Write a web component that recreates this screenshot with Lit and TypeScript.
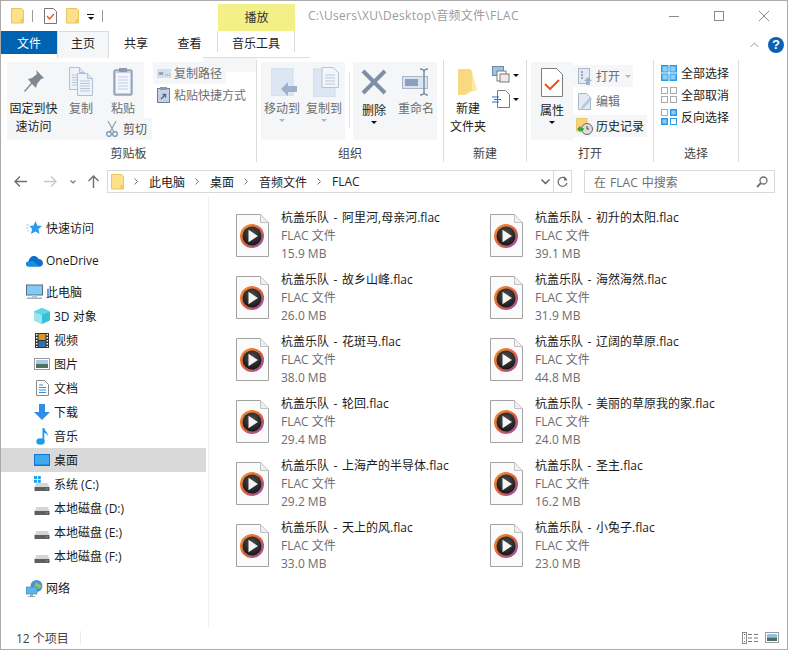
import { LitElement, html, css, svg } from "lit";
import { customElement } from "lit/decorators.js";

const folder = (w = 13, h = 16) => html`<svg width=${w} height=${h} viewBox="0 0 13 16"><path d="M.5.5h10l2 1.500v13H.5z" fill="#fde08a" stroke="#e8c564"/><rect x="9.500" y="11" width="3" height="4" fill="#f3c95f"/></svg>`;
const check = (w = 13, h = 16) => html`<svg width=${w} height=${h} viewBox="0 0 13 16"><path d="M.5.5h9l3 3v12H.5z" fill="#fff" stroke="#777"/><path d="M3 8l2.500 3L10 6" fill="none" stroke="#e8551e" stroke-width="1.400"/></svg>`;

const fileIcon = html`<svg width="33" height="43" viewBox="0 0 33 43">
  <defs><linearGradient id="ring" x1="0" y1="0" x2="1" y2="1"><stop offset="0" stop-color="#f59a2e"/><stop offset=".5" stop-color="#e0603c"/><stop offset="1" stop-color="#8a4bc0"/></linearGradient>
  <radialGradient id="disc" cx=".5" cy=".35" r=".7"><stop offset="0" stop-color="#4c4c4c"/><stop offset="1" stop-color="#141414"/></radialGradient></defs>
  <path d="M.5.5h24l8 8v34H.500z" fill="#fbfbfb" stroke="#a3a3a3"/><path d="M24.500.5v8h8" fill="#efefef" stroke="#c2c2c2"/>
  <circle cx="16" cy="22" r="12" fill="url(#ring)"/><circle cx="16" cy="22" r="9.500" fill="url(#disc)"/><path d="M12.500 15.800l9.500 6.200-9.500 6.200z" fill="#f4f4f4"/></svg>`;

const pc = html`<svg width="17" height="16" viewBox="0 0 17 16"><rect x=".5" y="1" width="16" height="10" fill="#7fcdf6" stroke="#5a6c7a"/><rect x="6" y="11" width="5" height="2.500" fill="#b9c4cc"/><rect x="1" y="13.500" width="15" height="1.500" fill="#9fb0bc"/></svg>`;
const drive = (win = false) => html`<svg width="16" height="16" viewBox="0 0 16 16">${win ? svg`<g fill="#1fa3ee"><rect x="0" y="0" width="3" height="3"/><rect x="3.800" y="0" width="3" height="3"/><rect x="0" y="3.800" width="3" height="3"/><rect x="3.800" y="3.800" width="3" height="3"/></g>` : ""}<path d="M2.500 7h11l2 4H.5z" fill="#d5d5d5"/><rect x=".5" y="11" width="15" height="4" fill="#5f5f5f"/><rect x="12" y="12.500" width="1.500" height="1" fill="#5fe05f"/></svg>`;

const navIcons: Record<string, unknown> = {
  star: html`<svg width="16" height="16" viewBox="0 0 16 16"><path d="M9.500 1l1.800 4.500L16 6l-3.500 3 1 5-4-2.500L5 14l1-5-2.500-3 4-.5z" fill="#2f9ceb"/><path d="M0 5h3M0 8h2.500M1 11h2" stroke="#9fd2f5"/></svg>`,
  cloud: html`<svg width="17" height="13" viewBox="0 0 17 13"><path d="M2.500 12.500C.5 12.500 0 10.800 0 10c0-1.500 1-2.500 2.600-2.500C3 4 5.500 2 8 2c2 0 3.700 1 4.500 3 2.500 0 4.500 1.800 4.500 4 0 2.200-1.500 3.500-3 3.500z" fill="#0f6fc6"/><path d="M2.500 12.500C1 12.500 0 11 0 10c0-1.500 1-2.300 2.600-2.300l4-.7 7 5.500z" fill="#1590de"/></svg>`,
  pc,
  cube: html`<svg width="16" height="16" viewBox="0 0 16 16"><path d="M8 0l8 3.500v9L8 16 0 12.500v-9z" fill="#35c1d8"/><path d="M0 3.500L8 7v9l-8-3.500z" fill="#9be5ee"/><path d="M8 0l8 3.500L8 7 0 3.500z" fill="#5fd6e6"/></svg>`,
  video: html`<svg width="14" height="15" viewBox="0 0 14 15"><rect width="14" height="15" fill="#333"/><g fill="#fff"><rect x="1" y="1" width="1.500" height="1.500"/><rect x="1" y="4" width="1.500" height="1.500"/><rect x="1" y="7" width="1.500" height="1.500"/><rect x="1" y="10" width="1.500" height="1.500"/><rect x="1" y="13" width="1.500" height="1"/><rect x="11.500" y="1" width="1.500" height="1.500"/><rect x="11.500" y="4" width="1.500" height="1.500"/><rect x="11.500" y="7" width="1.500" height="1.500"/><rect x="11.500" y="10" width="1.500" height="1.500"/><rect x="11.500" y="13" width="1.500" height="1"/></g><rect x="3.500" y="1" width="7" height="6" fill="#d29a2b"/><rect x="3.500" y="8" width="7" height="6" fill="#2f6fb5"/></svg>`,
  pic: html`<svg width="16" height="12" viewBox="0 0 16 12"><rect x=".5" y=".5" width="15" height="11" fill="#fff" stroke="#9a9a9a"/><rect x="2" y="2" width="12" height="4" fill="#a9c9e3"/><rect x="2" y="6" width="12" height="4" fill="#4f6f60"/></svg>`,
  doc: html`<svg width="13" height="16" viewBox="0 0 13 16"><path d="M.5.5h8l4 4v11H.5z" fill="#fff" stroke="#8a8a8a"/><path d="M3 5h4M3 7.500h7M3 10h7M3 12.500h7" stroke="#2f8fe0"/></svg>`,
  down: html`<svg width="16" height="16" viewBox="0 0 16 16"><path d="M5 0h6v8h5l-8 8-8-8h5z" fill="#2f8fe6"/></svg>`,
  music: html`<svg width="12" height="17" viewBox="0 0 12 17"><ellipse cx="4.500" cy="13.500" rx="4.200" ry="3.300" fill="#1e9be8"/><path d="M6.500 0h1.800c.3 3 3.700 4 3.700 8-1-2-2.500-3-3.700-3.300V13.500H6.500z" fill="#1e9be8"/></svg>`,
  desk: html`<svg width="16" height="12" viewBox="0 0 16 12"><rect width="16" height="12" fill="#0a78d7"/><rect x="1" y="1" width="14" height="9.500" fill="#42a8f0"/></svg>`,
  sys: drive(true),
  drive: drive(),
  net: html`<svg width="17" height="17" viewBox="0 0 17 17"><circle cx="10.500" cy="6" r="6" fill="#4a93c9"/><path d="M8 1c2 1 2 3 1 4s-2 2-2 3l4 1c2-1 4-1 5-3" fill="#8fc46a"/><rect x="0" y="7" width="11" height="7" fill="#57b5ef" stroke="#3b7fae" stroke-width=".6"/><rect x="4" y="14" width="3" height="2" fill="#9aa9b4"/><rect x="2" y="16" width="7" height="1" fill="#9aa9b4"/></svg>`,
};

const nav: { icon: string; label: string; lvl: number; sel?: boolean; gap?: boolean }[] = [
  { icon: "star", label: "快速访问", lvl: 0 },
  { icon: "cloud", label: "OneDrive", lvl: 0, gap: true },
  { icon: "pc", label: "此电脑", lvl: 0, gap: true },
  { icon: "cube", label: "3D 对象", lvl: 1 },
  { icon: "video", label: "视频", lvl: 1 },
  { icon: "pic", label: "图片", lvl: 1 },
  { icon: "doc", label: "文档", lvl: 1 },
  { icon: "down", label: "下载", lvl: 1 },
  { icon: "music", label: "音乐", lvl: 1 },
  { icon: "desk", label: "桌面", lvl: 1, sel: true },
  { icon: "sys", label: "系统 (C:)", lvl: 1 },
  { icon: "drive", label: "本地磁盘 (D:)", lvl: 1 },
  { icon: "drive", label: "本地磁盘 (E:)", lvl: 1 },
  { icon: "drive", label: "本地磁盘 (F:)", lvl: 1 },
  { icon: "net", label: "网络", lvl: 0, gap: true },
];

const files: [string, string][] = [
  ["杭盖乐队 - 阿里河,母亲河.flac", "15.9 MB"], ["杭盖乐队 - 初升的太阳.flac", "39.1 MB"],
  ["杭盖乐队 - 故乡山峰.flac", "26.0 MB"], ["杭盖乐队 - 海然海然.flac", "31.9 MB"],
  ["杭盖乐队 - 花斑马.flac", "38.0 MB"], ["杭盖乐队 - 辽阔的草原.flac", "44.8 MB"],
  ["杭盖乐队 - 轮回.flac", "29.4 MB"], ["杭盖乐队 - 美丽的草原我的家.flac", "24.0 MB"],
  ["杭盖乐队 - 上海产的半导体.flac", "29.2 MB"], ["杭盖乐队 - 圣主.flac", "16.2 MB"],
  ["杭盖乐队 - 天上的风.flac", "33.0 MB"], ["杭盖乐队 - 小兔子.flac", "23.0 MB"],
];

const docs = (x: number, y: number) => svg`<g transform="translate(${x} ${y})"><path d="M.5.5h10l5 5v17H.5z" fill="#eef3fa" stroke="#b2c0d6"/><path d="M10.500.5v5h5" fill="#dbe4f1" stroke="#b2c0d6"/><path d="M3 8h10M3 10.500h10M3 13h10M3 15.500h10M3 18h10" stroke="#b9c7db"/></g>`;

@customElement("app-root")
export class AppRoot extends LitElement {
  static styles = css`
    :host { display: block; width: 788px; height: 650px; font-family: "Open Sans", "Noto Sans CJK SC", "Noto Sans", sans-serif; font-size: 12px; color: #1a1a1a; }
    * { box-sizing: border-box; }
    svg { display: block; flex: none; }
    .win { position: relative; width: 788px; height: 650px; border: 1px solid #ababab; background: #fff; display: flex; flex-direction: column; overflow: hidden; }

    .title { height: 30px; display: flex; align-items: flex-start; flex: none; }
    .qat { display: flex; align-items: center; height: 30px; padding-left: 10px; width: 217px; flex: none; }
    .qsep { width: 1px; height: 12px; background: #9a9a9a; flex: none; }
    .qsep.a { margin: 0 11px 0 8px; }
    .qgap { width: 9px; flex: none; }
    .drop { width: 0; height: 0; border-left: 3px solid transparent; border-right: 3px solid transparent; border-top: 3px solid #111; flex: none; }
    .qdrop { display: flex; flex-direction: column; gap: 2px; align-items: center; margin: 2px 8px 0 8px; }
    .qdrop i { width: 7px; height: 1px; background: #111; }
    .ctx { width: 77px; height: 27px; margin-top: 3px; background: #f4f088; text-align: center; line-height: 27px; flex: none; color: #333; }
    .path { color: #9b9b9b; margin-left: 13px; line-height: 29px; flex: 1; letter-spacing: .3px; }
    .wc { display: flex; flex: none; margin-right: 1px; }
    .wc div { width: 45px; height: 29px; display: flex; align-items: center; justify-content: center; }

    .tabs { height: 23px; display: flex; flex: none; position: relative; }
    .tab { height: 23px; line-height: 26px; text-align: center; flex: none; color: #222; }
    .t-file { width: 56px; background: #0063b1; color: #fff; }
    .t-home { width: 52px; height: 27px; background: #f5f6f7; border: 1px solid #dadbdc; border-bottom: 0; position: relative; z-index: 1; line-height: 24px; }
    .t-share { width: 54px; }
    .t-see { width: 53px; }
    .t-music { width: 78px; margin-left: 1px; border-left: 1px solid #dadbdc; border-right: 1px solid #dadbdc; height: 21px; line-height: 26px; }
    .tabs-right { margin-left: auto; display: flex; align-items: center; gap: 9px; padding-right: 3px; height: 23px; margin-top: 2px; }
    .help { width: 16px; height: 16px; border-radius: 50%; background: #0a62b6; color: #fff; font: bold 13px/16px "Liberation Sans", sans-serif; text-align: center; }

    .ribbon { height: 114px; display: flex; flex: none; color: #6e6e6e; }
    .group { display: flex; flex-direction: column; border-right: 1px solid #dcdcdc; height: 102px; margin-top: 6px; flex: none; }
    .gbody { height: 84px; display: flex; padding-top: 2px; }
    .glabel { height: 18px; line-height: 20px; text-align: center; color: #444; }
    .g1 { width: 256px; } .g2 { width: 187px; } .g3 { width: 83px; } .g4 { width: 127px; } .g5 { width: 85px; }
    .bg { background: #f5f6f7; height: 78px; display: flex; flex: none; }
    .b { display: flex; flex-direction: column; align-items: center; flex: none; line-height: 18px; text-align: center; }
    .dark { color: #222; }
    .ic { height: 34px; display: flex; align-items: center; justify-content: center; margin-top: 2px; margin-bottom: 2px; }
    .ic.tall { height: 36px; margin-bottom: 0; }
    .ic.tall.d { margin-bottom: 2px; }
    .clipright { display: flex; flex-direction: column; width: 84px; flex: none; }
    .clipright .row { display: flex; height: 56px; }
    .cut { display: flex; align-items: center; gap: 5px; width: 48px; height: 22px; margin-left: 44px; background: #f5f6f7; padding-left: 2px; flex: none; white-space: nowrap; color: #555; }
    .stack { display: flex; flex-direction: column; flex: none; }
    .si { display: flex; align-items: center; gap: 3px; height: 22px; padding-left: 4px; white-space: nowrap; }
    .si.hi { background: #f5f6f7; }
    .downarr { width: 0; height: 0; border-left: 3px solid transparent; border-right: 3px solid transparent; border-top: 3px solid #b5b5b5; margin-top: 1px; }
    .downarr.k { border-top-color: #111; }
    .ghost { position: absolute; left: 202px; top: 56px; width: 107px; height: 1px; background: #dedede; }
    .ghost2 { position: absolute; left: 202px; top: 57px; width: 53px; height: 4px; background: #f5f6f7; }
    .ghost3 { position: absolute; left: 225px; top: 61px; width: 30px; height: 10px; background: #f5f6f7; }

    .addr { height: 28px; flex: none; display: flex; align-items: flex-start; }
    .navbtns { width: 106px; height: 23px; margin-top: 2px; display: flex; align-items: center; flex: none; }
    .box { border: 1px solid #d9d9d9; height: 23px; margin-top: 2px; display: flex; align-items: center; }
    .crumbs { width: 465px; flex: none; padding-left: 3px; }
    .crumbs .c { color: #222; }
    .chev { margin: 0 11px 0 10px; }
    .ab-r { margin-left: auto; display: flex; align-items: center; height: 21px; }
    .ab-r .refresh { width: 18px; height: 21px; border-left: 1px solid #d9d9d9; display: flex; align-items: center; justify-content: center; margin-left: 3px; }
    .search { width: 191px; margin-left: 12px; flex: none; padding: 0 6px 0 9px; color: #6d6d6d; justify-content: space-between; word-spacing: 1px; }

    .main { flex: 1; display: flex; min-height: 0; }
    .tree { width: 205px; flex: none; padding-top: 20px; }
    .n { height: 24px; display: flex; align-items: center; white-space: nowrap; color: #1a1a1a; }
    .n .i { width: 18px; display: flex; justify-content: center; margin-right: 3px; flex: none; }
    .n.l0 { padding-left: 24px; }
    .n.l1 { padding-left: 32px; }
    .n.gap { margin-top: 8px; }
    .n.sel { background: #d9d9d9; }
    .vline { width: 1px; background: #f0f0f0; margin-left: 2px; flex: none; }
    .list { flex: 1; padding: 12px 0 0 27px; display: grid; grid-template-columns: 254px 254px; grid-auto-rows: 62px; align-content: start; }
    .f { display: flex; }
    .f svg { margin-top: 6px; }
    .meta { margin: 1px 0 0 12px; line-height: 18px; white-space: nowrap; }
    .meta .nm { color: #1a1a1a; word-spacing: 1.500px; }
    .meta .s { color: #6d6d6d; }

    .status { height: 21px; flex: none; display: flex; align-items: center; padding: 0 0 2px 15px; color: #444; }
    .status .sp { width: 1px; height: 14px; background: #ececec; margin-left: 11px; }
    .views { margin-left: auto; display: flex; align-items: center; gap: 7px; padding-right: 8px; }
    .nb1 { margin-left: 13px; } .nb2 { margin-left: 17px; } .nb3 { margin-left: 13px; } .nb4 { margin-left: 12px; }
    .shift { margin-left: 4px; }
    .w53 { width: 53px; } .w42 { width: 42px; }
    .fold { width: 48px; }
    .fic { height: 38px; display: flex; align-items: center; justify-content: center; }
    .bgc { width: 137px; } .bgm { width: 84px; } .bgp { width: 42px; display: block; }
    .gp6 { padding-left: 6px; } .gp4 { padding-left: 4px; } .gp7 { padding-left: 7px; }
    .ms9 { margin-left: 9px; }
    .w73 { width: 73px; }
    .g4gap { gap: 4px; }
    .div { width: 1px; height: 56px; background: #e3e3e3; margin: 10px 3px 0 4px; flex: none; }
    .newst { padding-top: 2px; gap: 2px; }
    .p0 { padding: 0; }
    .opn { padding-top: 3px; }
    .o1 { width: 60px; padding-left: 5px; gap: 4px; }
    .o1 .downarr { margin: 0 0 0 1px; }
    .o2 { padding-left: 5px; margin-top: 3px; gap: 4px; }
    .o3 { width: 74px; padding-left: 3px; margin-top: 3px; }
  `;

  render() {
    return html`<div class="win">
      <div class="title">
        <div class="qat">
          ${folder()}<div class="qsep a"></div>
          ${check()}<div class="qgap"></div>${folder()}
          <div class="qdrop"><i></i><div class="drop"></div></div>
          <div class="qsep"></div>
        </div>
        <div class="ctx">播放</div>
        <div class="path">C:\\Users\\XU\\Desktop\\音频文件\\FLAC</div>
        <div class="wc">
          <div><svg width="10" height="10"><path d="M0 5.500h10" stroke="#8a8a8a"/></svg></div>
          <div><svg width="10" height="10"><rect x=".5" y=".5" width="9" height="9" fill="none" stroke="#8a8a8a"/></svg></div>
          <div><svg width="10" height="10"><path d="M0 0l10 10M10 0L0 10" stroke="#8a8a8a"/></svg></div>
        </div>
      </div>
      <div class="tabs">
        <div class="tab t-file">文件</div><div class="tab t-home">主页</div><div class="tab t-share">共享</div><div class="tab t-see">查看</div><div class="tab t-music">音乐工具</div>
        <div class="tabs-right"><svg width="9" height="6"><path d="M.5 5L4.500 1l4 4" fill="none" stroke="#9a9a9a"/></svg><div class="help">?</div></div>
      </div>
      ${this.ribbon()}
      ${this.addr()}
      <div class="main">
        <div class="tree">
          ${nav.map((n) => html`<div class="n l${n.lvl} ${n.sel ? "sel" : ""} ${n.gap ? "gap" : ""}"><span class="i">${navIcons[n.icon]}</span>${n.label}</div>`)}
        </div>
        <div class="vline"></div>
        <div class="list">
          ${files.map(([a, s]) => html`<div class="f">${fileIcon}<div class="meta"><div class="nm">${a}</div><div class="s">FLAC 文件</div><div class="s">${s}</div></div></div>`)}
        </div>
      </div>
      <div class="status">12 个项目<div class="sp"></div>
        <div class="views">
          <svg width="16" height="12" viewBox="0 0 16 12"><rect x=".5" y=".5" width="4" height="11" fill="#fff" stroke="#8c8c8c"/><rect x="2" y="2" width="1" height="1" fill="#555"/><rect x="2" y="5.500" width="1" height="1" fill="#2f8fe0"/><rect x="2" y="9" width="1" height="1" fill="#d33"/><path d="M6 2.500h4M12 2.500h4M6 6h4M12 6h4M6 9.500h4M12 9.500h4" stroke="#777"/></svg>
          <svg width="14" height="11" viewBox="0 0 14 11"><rect x=".5" y=".5" width="13" height="10" fill="#fff" stroke="#9a9a9a"/><rect x="2" y="2" width="10" height="3.500" fill="#8fc0e6"/><rect x="2" y="5.500" width="10" height="3.500" fill="#4f6f60"/></svg>
        </div>
      </div>
      <div class="ghost"></div><div class="ghost2"></div><div class="ghost3"></div>
    </div>`;
  }

  ribbon() {
    return html`<div class="ribbon">
      <div class="group g1">
        <div class="gbody gp6">
          <div class="bg bgc">
            <div class="b dark w53"><div class="ic"><svg width="22" height="24" viewBox="0 0 22 24"><path d="M13 1l8 8-3 1-4 5-1 4-4-4-7 8-1-1 7-8-3-4 4-1 5-4z" fill="#808891"/></svg></div>固定到快<br />速访问</div>
            <div class="clipright">
              <div class="row">
                <div class="b w42"><div class="ic"><svg width="25" height="29" viewBox="0 0 25 29">${docs(0, 0)}${docs(8, 6)}</svg></div>复制</div>
                <div class="b w42"><div class="ic"><svg width="20" height="29" viewBox="0 0 20 29"><rect x="1" y="3" width="18" height="25" rx="1" fill="#c3cfe0" stroke="#6e7f95"/><rect x="3" y="6" width="14" height="20" fill="#f3f6fa"/><path d="M5 10h10M5 13h10M5 16h10M5 19h10M5 22h10" stroke="#c3cfe0"/><rect x="6" y="1" width="8" height="4" fill="#8a9ab0"/></svg></div>粘贴</div>
              </div>
              <div class="cut"><svg width="12" height="16" viewBox="0 0 12 16"><path d="M2 0l6 11M10 0L4 11" stroke="#9aa5b2" stroke-width="1.300"/><circle cx="3" cy="13" r="2.300" fill="none" stroke="#6e8fb5" stroke-width="1.200"/><circle cx="9" cy="13" r="2.300" fill="none" stroke="#6e8fb5" stroke-width="1.200"/></svg>剪切</div>
            </div>
          </div>
          <div class="stack ms9">
            <div class="si hi w73"><svg width="14" height="9" viewBox="0 0 14 9"><rect width="14" height="9" fill="#d5deeb"/><path d="M2 3l1 3 1-3 1 3 1-3M8 6h1M10 6h1M12 6h1" stroke="#6f7f95" stroke-width=".7" fill="none"/></svg>复制路径</div>
            <div class="si g4gap"><svg width="13" height="16" viewBox="0 0 13 16"><rect x=".5" y="1.500" width="12" height="14" fill="#c3d2e6" stroke="#6e7f95"/><rect x="3" y="0" width="7" height="3" fill="#8a9ab0"/><path d="M4 12l4-4M5.500 7.500H8.500v3" stroke="#52667f" stroke-width="1.300" fill="none"/></svg>粘贴快捷方式</div>
          </div>
        </div>
        <div class="glabel">剪贴板</div>
      </div>
      <div class="group g2">
        <div class="gbody gp4">
          <div class="bg bgm">
            <div class="b w42"><div class="ic tall"><svg class="shift" width="26" height="28" viewBox="0 0 26 28"><rect width="22" height="28" fill="#dde6f3" stroke="#cfdbec"/><path d="M10 21l7-7v4h9v6h-9v4z" fill="#9fb2cd"/></svg></div>移动到<div class="downarr"></div></div>
            <div class="b w42"><div class="ic tall"><svg class="shift" width="26" height="30" viewBox="0 0 26 30"><rect x="0" y="2" width="22" height="28" fill="#dde6f3" stroke="#cfdbec"/><path d="M9 .5h11l5.500 5v15H9z" fill="#f3f6fa" stroke="#b6c4d8"/><path d="M12 8h10M12 11h10M12 14h10M12 17h10" stroke="#b9c7db"/></svg></div>复制到<div class="downarr"></div></div>
          </div>
          <div class="div"></div>
          <div class="bg bgm">
            <div class="b dark w42"><div class="ic tall d"><svg width="26" height="26" viewBox="0 0 26 26"><path d="M2 2l22 22M24 2L2 24" stroke="#7e8fa8" stroke-width="4"/></svg></div>删除<div class="downarr k"></div></div>
            <div class="b w42"><div class="ic tall"><svg width="28" height="28" viewBox="0 0 28 28"><rect x=".5" y="8.500" width="25" height="12" fill="#dbe5f2" stroke="#a9b8cc"/><rect x="3" y="11" width="13" height="7" fill="#8da0bb"/><path d="M18 1c3 0 4 1 4 3v20c0 2-1 3-4 3M26 1c-3 0-4 1-4 3M26 27c-3 0-4-1-4-3" fill="none" stroke="#7e8fa8" stroke-width="1.500"/></svg></div>重命名</div>
          </div>
        </div>
        <div class="glabel">组织</div>
      </div>
      <div class="group g3">
        <div class="gbody">
          <div class="b dark fold"><div class="fic"><svg width="20" height="27" viewBox="0 0 20 27"><defs><linearGradient id="fo" x1="0" y1="0" x2="1" y2="1"><stop offset="0" stop-color="#f4cf6b"/><stop offset="1" stop-color="#fdeab0"/></linearGradient></defs><path d="M0 1h12l2 2v20L7 27H0z" fill="#f8d980"/><path d="M14 3l5 19-5 1z" fill="#fde9a8"/><path d="M0 27l14-4 5-1H6z" fill="url(#fo)"/></svg></div>新建<br />文件夹</div>
          <div class="stack newst">
            <div class="si p0"><svg width="18" height="18" viewBox="0 0 18 18"><rect x=".5" y=".5" width="11" height="9" fill="#9cc4e8" stroke="#6b8aa8"/><rect x="5" y="5" width="9" height="10" fill="#fff" stroke="#7a7a7a"/><rect x="8" y="8" width="9" height="8" fill="#f5e6ea" stroke="#7a7a7a"/></svg><div class="drop"></div></div>
            <div class="si p0"><svg width="18" height="18" viewBox="0 0 18 18"><path d="M5.500.5h8l4 4v13h-12z" fill="#fff" stroke="#7a7a7a"/><path d="M0 7h7M2 9.500h7M0 12h7" stroke="#1f6fd0"/></svg><div class="drop"></div></div>
          </div>
        </div>
        <div class="glabel">新建</div>
      </div>
      <div class="group g4">
        <div class="gbody gp4">
          <div class="bg bgp">
            <div class="b dark"><div class="ic tall d"><svg width="22" height="29" viewBox="0 0 22 29"><path d="M.5.5h15l6 6v22H.5z" fill="#fff" stroke="#7d7d7d"/><path d="M4 16l5 5 9-9" fill="none" stroke="#e8551e" stroke-width="2"/></svg></div>属性<div class="downarr k"></div></div>
          </div>
          <div class="stack opn">
            <div class="si hi o1"><svg width="14" height="17" viewBox="0 0 14 17"><rect x=".5" y=".5" width="11" height="15" fill="#e4eaf3" stroke="#a9b8cc"/><path d="M3 4h2M3 7h2M3 10h2" stroke="#7e8fa8" stroke-width="1.500"/><path d="M10 9l4 4h-2v4H8v-4H6z" fill="#9fb2cd"/></svg>打开<div class="downarr"></div></div>
            <div class="si o2"><svg width="14" height="17" viewBox="0 0 14 17"><path d="M.5.5h8l4 4v12H.5z" fill="#e4eaf3" stroke="#a9b8cc"/><path d="M4 13l8-9 2 2-8 9-3 1z" fill="#b8c7dc"/></svg>编辑</div>
            <div class="si hi dark o3"><svg width="17" height="17" viewBox="0 0 17 17"><rect x="0" y="0" width="11" height="13" fill="#f6d57a" stroke="#d8b351" stroke-width=".6"/><circle cx="11" cy="11" r="5.500" fill="#ddd" stroke="#666"/><path d="M11 8v3h2" stroke="#444" fill="none"/><path d="M1 11l3-3 1 2 3 0-1 3-3 0 1 2z" fill="#3aa63a"/></svg>历史记录</div>
          </div>
        </div>
        <div class="glabel">打开</div>
      </div>
      <div class="group g5">
        <div class="gbody gp7">
          <div class="stack dark">
            <div class="si p0 g4gap"><svg width="16" height="16" viewBox="0 0 16 16"><rect width="16" height="16" fill="#2b9be8"/><path d="M8 0v16M0 8h16" stroke="#fff"/><rect x="1.500" y="1.500" width="5" height="5" fill="#8fcdf6"/><rect x="9.500" y="1.500" width="5" height="5" fill="#8fcdf6"/><rect x="1.500" y="9.500" width="5" height="5" fill="#8fcdf6"/><rect x="9.500" y="9.500" width="5" height="5" fill="#8fcdf6"/></svg>全部选择</div>
            <div class="si p0 g4gap"><svg width="16" height="16" viewBox="0 0 16 16"><g fill="#fff" stroke="#aaa"><rect x=".5" y=".5" width="6" height="6"/><rect x="9.500" y=".5" width="6" height="6"/><rect x=".5" y="9.500" width="6" height="6"/><rect x="9.500" y="9.500" width="6" height="6"/></g></svg>全部取消</div>
            <div class="si p0 g4gap"><svg width="16" height="16" viewBox="0 0 16 16"><rect x=".5" y=".5" width="6" height="6" fill="#fff" stroke="#aaa"/><rect x="9" y="0" width="7" height="7" fill="#2b9be8"/><rect x="10.500" y="1.500" width="4" height="4" fill="#8fcdf6"/><rect x="0" y="9" width="7" height="7" fill="#2b9be8"/><rect x="1.500" y="10.500" width="4" height="4" fill="#8fcdf6"/><rect x="9.500" y="9.500" width="6" height="6" fill="#fff" stroke="#2b9be8"/></svg>反向选择</div>
          </div>
        </div>
        <div class="glabel">选择</div>
      </div>
    </div>`;
  }

  addr() {
    const chev = html`<svg class="chev" width="4" height="7" viewBox="0 0 4 7"><path d="M.5.5l3 3-3 3" fill="none" stroke="#777"/></svg>`;
    return html`<div class="addr">
      <div class="navbtns">
        <svg class="nb1" width="13" height="11" viewBox="0 0 13 11"><path d="M6 .5L1 5.500l5 5M1 5.500h12" fill="none" stroke="#6e6e6e" stroke-width="1.400"/></svg>
        <svg class="nb2" width="13" height="11" viewBox="0 0 13 11"><path d="M7 .5l5 5-5 5M12 5.500H0" fill="none" stroke="#c8c8c8" stroke-width="1.400"/></svg>
        <svg class="nb3" width="6" height="4" viewBox="0 0 6 4"><path d="M.5.5L3 3 5.500.5" fill="none" stroke="#777" stroke-width="1.200"/></svg>
        <svg class="nb4" width="11" height="13" viewBox="0 0 11 13"><path d="M.5 6l5-5 5 5M5.500 1v12" fill="none" stroke="#6e6e6e" stroke-width="1.400"/></svg>
      </div>
      <div class="box crumbs">
        ${folder()}${chev}<span class="c">此电脑</span>${chev}<span class="c">桌面</span>${chev}<span class="c">音频文件</span>${chev}<span class="c">FLAC</span>
        <div class="ab-r">
          <svg width="9" height="6" viewBox="0 0 9 6"><path d="M.5.5l4 4 4-4" fill="none" stroke="#555" stroke-width="1.300"/></svg>
          <div class="refresh"><svg width="11" height="12" viewBox="0 0 11 12"><path d="M9.500 3.500A4.500 4.500 0 1 0 10 7" fill="none" stroke="#6e6e6e" stroke-width="1.300"/><path d="M7 0v4.500h3.500z" fill="#6e6e6e"/></svg></div>
        </div>
      </div>
      <div class="box search">在 FLAC 中搜索<svg width="12" height="12" viewBox="0 0 12 12"><circle cx="7.500" cy="4.500" r="3.500" fill="none" stroke="#6e6e6e" stroke-width="1.300"/><path d="M5 7l-4 4" stroke="#6e6e6e" stroke-width="1.800"/></svg></div>
    </div>`;
  }
}
